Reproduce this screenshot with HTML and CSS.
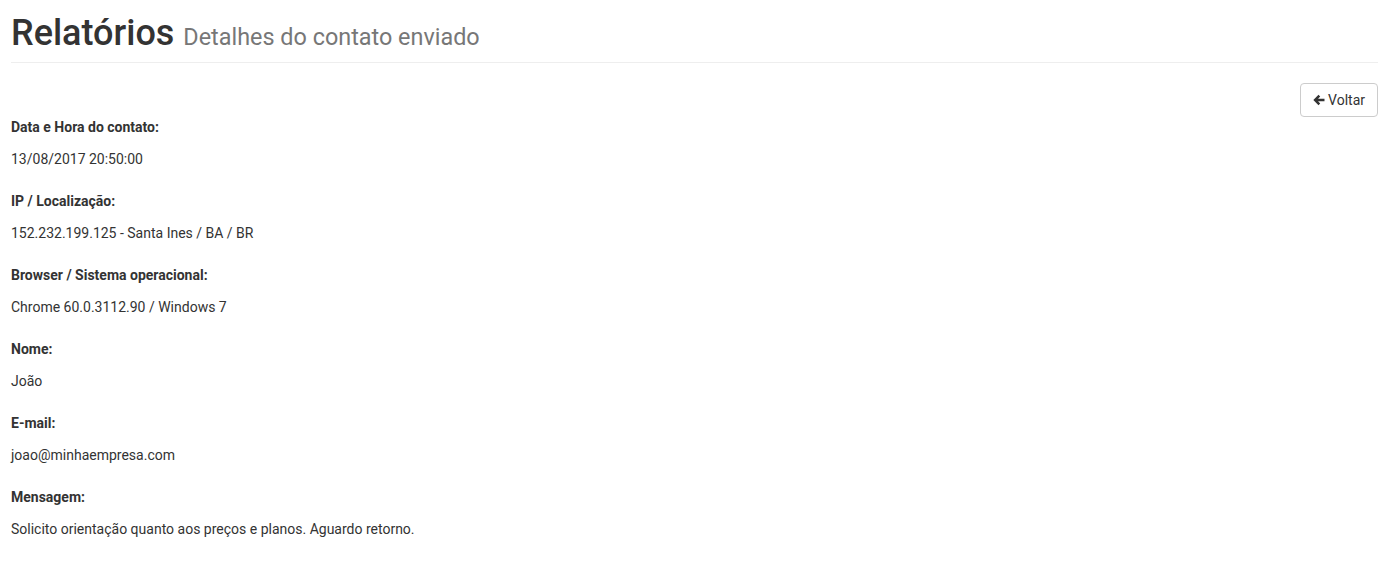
FILE: index.html
```html
<!DOCTYPE html>
<html lang="pt-BR">
<head>
<meta charset="utf-8">
<title>Relatórios</title>
<link rel="stylesheet" href="styles.css">
</head>
<body>
<div class="wrap">
  <div class="page-header">
    <h1>Relatórios <small>Detalhes do contato enviado</small></h1>
  </div>
  <div class="actions">
    <button class="btn" type="button">
      <svg class="ico" viewBox="0 0 14 14" width="12" height="12" aria-hidden="true"><path d="M0.4 7 L6.4 1 L8.4 3 L5.9 5.5 H13.4 V8.5 H5.9 L8.4 11 L6.4 13 Z" fill="#333"/></svg>
      Voltar
    </button>
  </div>
  <div class="group">
    <label>Data e Hora do contato:</label>
    <p class="static">13/08/2017 20:50:00</p>
  </div>
  <div class="group">
    <label>IP / Localização:</label>
    <p class="static">152.232.199.125 - Santa Ines / BA / BR</p>
  </div>
  <div class="group">
    <label>Browser / Sistema operacional:</label>
    <p class="static">Chrome 60.0.3112.90 / Windows 7</p>
  </div>
  <div class="group">
    <label>Nome:</label>
    <p class="static">João</p>
  </div>
  <div class="group">
    <label>E-mail:</label>
    <p class="static">joao@minhaempresa.com</p>
  </div>
  <div class="group">
    <label>Mensagem:</label>
    <p class="static">Solicito orientação quanto aos preços e planos. Aguardo retorno.</p>
  </div>
</div>
</body>
</html>
```

FILE: styles.css
```css
* { box-sizing: border-box; }
html, body { margin: 0; padding: 0; background: #fff; }
body {
  font-family: Roboto, "Liberation Sans", Arial, sans-serif;
  font-size: 14px;
  line-height: 20px;
  color: #333;
}
.wrap { padding: 0 11px; }
.page-header {
  margin: 14px 0 20px;
  padding-bottom: 8px;
  border-bottom: 1px solid #eee;
}
.page-header h1 {
  margin: 0;
  font-size: 36px;
  line-height: 1.1;
  font-weight: 500;
  color: #333;
}
.page-header small {
  font-size: 65%;
  font-weight: 400;
  color: #777;
}
.actions {
  display: flex;
  justify-content: flex-end;
}
.btn {
  display: inline-flex;
  align-items: center;
  gap: 3px;
  height: 34px;
  padding: 6px 12px;
  font-family: inherit;
  font-size: 14px;
  line-height: 20px;
  color: #333;
  background: #fff;
  border: 1px solid #ccc;
  border-radius: 4px;
  cursor: pointer;
}
.ico { display: block; }
.group { margin-bottom: 15px; }
.group label {
  display: block;
  margin-bottom: 5px;
  font-weight: 700;
}
.static {
  margin: 0;
  min-height: 34px;
  padding: 7px 0;
}
```
